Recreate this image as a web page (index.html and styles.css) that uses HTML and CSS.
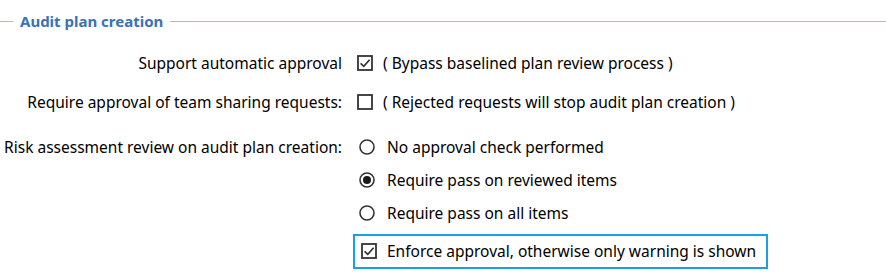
FILE: index.html
```html
<!DOCTYPE html>
<html lang="en">
<head>
  <meta charset="UTF-8">
  <title>Audit plan creation</title>
  <link rel="stylesheet" href="styles.css">
</head>
<body>
  <div class="group">
    <div class="legend">
      <span class="rule rule-short"></span>
      <span class="legend-text">Audit plan creation</span>
      <span class="rule"></span>
    </div>

    <div class="row row-first">
      <div class="label">Support automatic approval</div>
      <div class="control">
        <svg class="box" viewBox="0 0 16 16"><rect x="1" y="1" width="14" height="14" fill="#fff" stroke="#333" stroke-width="1.8"/><polyline points="3.6,8.4 6.8,11.4 12.6,4.8" fill="none" stroke="#333" stroke-width="1.7"/></svg>
        <span class="hint">( Bypass baselined plan review process )</span>
      </div>
    </div>

    <div class="row row-second">
      <div class="label">Require approval of team sharing requests:</div>
      <div class="control">
        <svg class="box" viewBox="0 0 16 16"><rect x="1" y="1" width="14" height="14" fill="#fff" stroke="#333" stroke-width="1.8"/></svg>
        <span class="hint">( Rejected requests will stop audit plan creation )</span>
      </div>
    </div>

    <div class="row row-third">
      <div class="label">Risk assessment review on audit plan creation:</div>
      <div class="options">
        <div class="option">
          <svg class="radio" viewBox="0 0 16 16"><circle cx="8" cy="8" r="7" fill="#fff" stroke="#333" stroke-width="1.6"/></svg>
          <span>No approval check performed</span>
        </div>
        <div class="option">
          <svg class="radio" viewBox="0 0 16 16"><circle cx="8" cy="8" r="7" fill="#fff" stroke="#333" stroke-width="1.6"/><circle cx="8" cy="8" r="4" fill="#1a1a1a"/></svg>
          <span>Require pass on reviewed items</span>
        </div>
        <div class="option">
          <svg class="radio" viewBox="0 0 16 16"><circle cx="8" cy="8" r="7" fill="#fff" stroke="#333" stroke-width="1.6"/></svg>
          <span>Require pass on all items</span>
        </div>
        <div class="option focused">
          <svg class="box" viewBox="0 0 16 16"><rect x="1" y="1" width="14" height="14" fill="#fff" stroke="#333" stroke-width="1.8"/><polyline points="3.6,8.4 6.8,11.4 12.6,4.8" fill="none" stroke="#333" stroke-width="1.7"/></svg>
          <span>Enforce approval, otherwise only warning is shown</span>
        </div>
      </div>
    </div>
  </div>
</body>
</html>
```

FILE: styles.css
```css
html, body {
  margin: 0;
  padding: 0;
  background: #fff;
}

body {
  font-family: "Noto Sans", "Open Sans", sans-serif;
  font-size: 15.5px;
  color: #000;
}

.group {
  padding-top: 9px;
}

.legend {
  display: flex;
  align-items: center;
  gap: 7px;
  height: 24px;
}

.legend-text {
  color: #3a72b4;
  font-weight: bold;
  font-size: 15px;
}

.rule {
  flex: 1;
  height: 1px;
  background: #a9bcd6;
}

.rule-short {
  flex: 0 0 13px;
}

.row {
  display: flex;
  align-items: flex-start;
}

.label {
  width: 342px;
  padding-right: 15px;
  text-align: right;
  line-height: 22px;
}

.row-first {
  margin-top: 19px;
}

.row-second {
  margin-top: 17px;
}

.row-third {
  margin-top: 23px;
}

.control,
.option {
  display: flex;
  align-items: center;
  gap: 10px;
  height: 22px;
}

.options {
  display: flex;
  flex-direction: column;
  gap: 11px;
}

.box {
  width: 16px;
  height: 16px;
  flex: none;
}

.radio {
  width: 16px;
  height: 16px;
  flex: none;
  margin-left: 2px;
}

.option .radio + span {
  margin-left: 2px;
}

.option .box {
  margin-left: 4px;
}

.focused {
  border: 2px solid #1ba1e2;
  margin-left: -4px;
  padding: 4px 10px 5px 2px;
  margin-top: -1px;
  align-self: flex-start;
}
```
